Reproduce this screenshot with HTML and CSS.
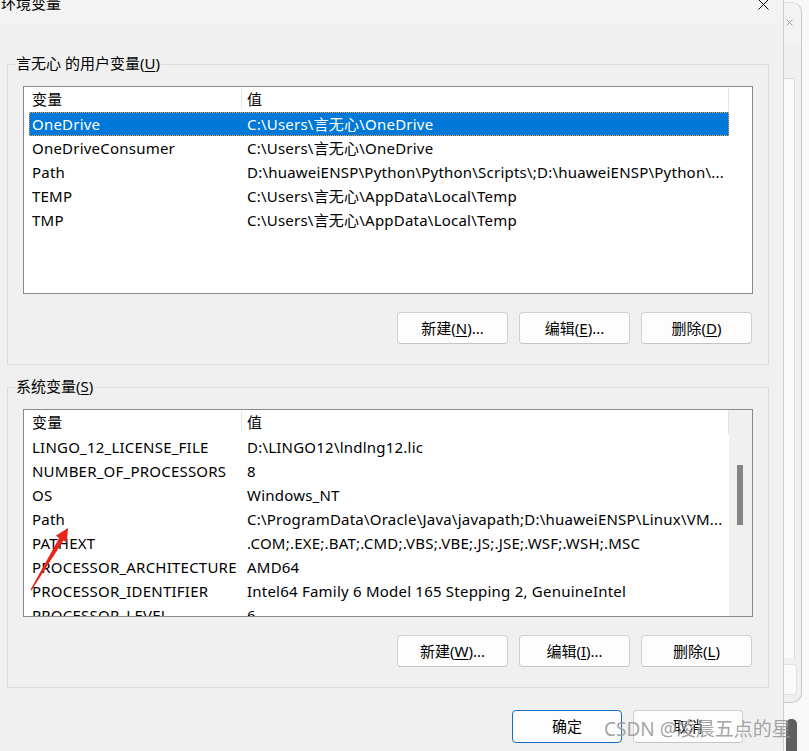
FILE: index.html
```html
<!DOCTYPE html>
<html lang="zh-CN">
<head>
<meta charset="utf-8">
<title>环境变量</title>
<link rel="stylesheet" href="styles.css">
</head>
<body>
<div class="screen">
  <div class="dialog">
    <div class="titlebar">
      <span class="title">环境变量</span>
      <svg class="close" width="11" height="11" viewBox="0 0 11 11"><path d="M0.5 0.5L10.5 10.5M10.5 0.5L0.5 10.5" stroke="#000" stroke-width="1" fill="none"/></svg>
    </div>

    <div class="group">
      <span class="legend">言无心 的用户变量(<u>U</u>)</span>
      <div class="list">
        <div class="cols">
          <div class="row head"><span class="c1">变量</span><span class="c2">值</span></div>
          <div class="row sel"><span class="c1">OneDrive</span><span class="c2">C:\Users\言无心\OneDrive</span></div>
          <div class="row"><span class="c1">OneDriveConsumer</span><span class="c2">C:\Users\言无心\OneDrive</span></div>
          <div class="row"><span class="c1">Path</span><span class="c2">D:\huaweiENSP\Python\Python\Scripts\;D:\huaweiENSP\Python\...</span></div>
          <div class="row"><span class="c1">TEMP</span><span class="c2">C:\Users\言无心\AppData\Local\Temp</span></div>
          <div class="row"><span class="c1">TMP</span><span class="c2">C:\Users\言无心\AppData\Local\Temp</span></div>
        </div>
        <div class="gutter"></div>
      </div>
      <div class="btns">
        <div class="btn">新建(<u>N</u>)...</div>
        <div class="btn">编辑(<u>E</u>)...</div>
        <div class="btn">删除(<u>D</u>)</div>
      </div>
    </div>

    <div class="group sys">
      <span class="legend">系统变量(<u>S</u>)</span>
      <div class="list">
        <div class="cols">
          <div class="row head"><span class="c1">变量</span><span class="c2">值</span></div>
          <div class="row"><span class="c1">LINGO_12_LICENSE_FILE</span><span class="c2">D:\LINGO12\lndlng12.lic</span></div>
          <div class="row"><span class="c1">NUMBER_OF_PROCESSORS</span><span class="c2">8</span></div>
          <div class="row"><span class="c1">OS</span><span class="c2">Windows_NT</span></div>
          <div class="row"><span class="c1">Path</span><span class="c2">C:\ProgramData\Oracle\Java\javapath;D:\huaweiENSP\Linux\VM...</span></div>
          <div class="row"><span class="c1">PATHEXT</span><span class="c2">.COM;.EXE;.BAT;.CMD;.VBS;.VBE;.JS;.JSE;.WSF;.WSH;.MSC</span></div>
          <div class="row"><span class="c1">PROCESSOR_ARCHITECTURE</span><span class="c2">AMD64</span></div>
          <div class="row"><span class="c1">PROCESSOR_IDENTIFIER</span><span class="c2">Intel64 Family 6 Model 165 Stepping 2, GenuineIntel</span></div>
          <div class="row"><span class="c1">PROCESSOR_LEVEL</span><span class="c2">6</span></div>
        </div>
        <div class="gutter track"><div class="thumb"></div></div>
      </div>
      <div class="btns">
        <div class="btn">新建(<u>W</u>)...</div>
        <div class="btn">编辑(<u>I</u>)...</div>
        <div class="btn">删除(<u>L</u>)</div>
      </div>
    </div>

    <div class="footer">
      <div class="btn big primary">确定</div>
      <div class="btn big">取消</div>
    </div>
  </div>

  <div class="side">
    <div class="bgwin">
      <svg class="bgclose" width="7" height="7" viewBox="0 0 7 7"><path d="M0.5 0.5L6.5 6.5M6.5 0.5L0.5 6.5" stroke="#a0a0a0" stroke-width="1" fill="none"/></svg>
      <div class="strip"></div>
      <div class="pill"></div>
    </div>
    <div class="sbar"></div>
  </div>
</div>

<svg class="arrow" width="50" height="74" viewBox="25 522 50 74">
  <polygon points="30.4,589.7 59.2,537.9 55.8,535.8 68,528 66.9,542.5 63.5,540.5 31.6,590.3" fill="#e8251c"/>
</svg>

<div class="watermark">CSDN @凌晨五点的星</div>
</body>
</html>
```

FILE: styles.css
```css
* { box-sizing: border-box; }
html, body { margin: 0; padding: 0; }
body {
  width: 809px;
  height: 751px;
  overflow: hidden;
  position: relative;
  background: #f0f0f0;
  font-family: "Noto Sans", "Noto Sans CJK SC", sans-serif;
  font-size: 15px;
  color: #000;
}
u { text-decoration: underline; text-underline-offset: 2px; }

.screen { display: flex; height: 751px; }

.dialog {
  width: 784px;
  border-right: 1px solid #cdcdcd;
  background: #f0f0f0;
  display: flex;
  flex-direction: column;
}

.titlebar {
  height: 23px;
  flex: none;
  background: #f3f3f3;
  display: flex;
  justify-content: space-between;
  align-items: flex-start;
  padding-right: 14px;
  overflow: hidden;
}
.title { line-height: 20px; margin-top: -7px; margin-left: 1px; }
.close { margin-top: -1px; }

.group {
  margin: 41px 14px 0 7px;
  border: 1px solid #dcdcdc;
  padding: 0 15px 20px 15px;
  display: flex;
  flex-direction: column;
}
.group.sys { margin-top: 22px; }
.legend {
  align-self: flex-start;
  margin: -12px 0 0 -8px;
  padding: 0 1px;
  line-height: 20px;
  background: #f0f0f0;
}

.list {
  margin-top: 13px;
  width: 730px;
  height: 208px;
  border: 1px solid #868a91;
  background: #fff;
  padding-left: 5px;
  display: flex;
  overflow: hidden;
}
.cols { width: 700px; flex: none; display: flex; flex-direction: column; }
.row {
  flex: none;
  display: flex;
  height: 24px;
  line-height: 22px;
  border: 1px solid transparent;
  white-space: nowrap;
  letter-spacing: 0.22px;
}
.row.head {
  height: 25px;
  line-height: 22px;
  border-right-color: #e5e5e5;
}
.c1 { width: 212px; flex: none; padding-left: 2px; overflow: hidden; }
.c2 { flex: 1; padding-left: 5px; overflow: hidden; }
.head .c1 {
  background: linear-gradient(#e5e5e5, #e5e5e5) no-repeat right top / 1px 21px;
}
.row.sel {
  background: #0078d7;
  color: #fff;
  border: 1px dotted #f0a040;
}

.gutter { width: 23px; flex: none; }
.gutter.track { background: #f0f0f0; padding: 55px 0 0 8px; }
.thumb { width: 6px; height: 60px; background: #858585; }

.btns {
  margin-top: 18px;
  margin-right: 1px;
  display: flex;
  justify-content: flex-end;
  gap: 11px;
}
.btn {
  width: 111px;
  height: 32px;
  line-height: 30px;
  text-align: center;
  background: #fdfdfd;
  border: 1px solid #d0d0d0;
  border-bottom-color: #c4c4c4;
  border-radius: 4px;
}
.footer {
  margin-top: 22px;
  padding-right: 40px;
  display: flex;
  justify-content: flex-end;
  gap: 11px;
}
.btn.big { width: 110px; height: 33px; line-height: 31px; }
.btn.primary { border: 1px solid #1a6ec4; }

.side {
  width: 25px;
  background: #f8f8f8;
  display: flex;
  flex-direction: column;
}
.bgwin {
  margin-top: 2px;
  width: 18px;
  height: 701px;
  background: linear-gradient(#f3f3f3 0, #f3f3f3 40px, #f0f0f0 40px);
  border-top: 1px solid #dedede;
  border-right: 1px solid #c9c9c9;
  border-bottom: 1px solid #c9c9c9;
  border-radius: 0 10px 10px 0;
  display: flex;
  flex-direction: column;
}
.bgclose { margin: 16px 0 0 2px; flex: none; }
.strip {
  margin-top: 52px;
  width: 11px;
  height: 580px;
  background: #fafafa;
  border-top: 1px solid #dcdcdc;
  border-right: 1px solid #dcdcdc;
}
.pill {
  margin-top: 6px;
  width: 13px;
  height: 31px;
  background: #fafafa;
  border: 1px solid #e2e2e2;
  border-left: none;
  border-radius: 0 4px 4px 0;
}
.sbar {
  margin: 16px 0 0 2px;
  width: 11px;
  flex: 1;
  background: #5f5f5f;
  border-radius: 5px 5px 0 0;
}

.arrow { position: absolute; left: 25px; top: 522px; }

.watermark {
  position: absolute;
  left: 604px;
  top: 715px;
  font-size: 19px;
  line-height: 28px;
  color: rgba(105, 105, 105, 0.62);
  text-shadow: 0 0 1px rgba(255, 255, 255, 0.7);
  white-space: nowrap;
}
```
